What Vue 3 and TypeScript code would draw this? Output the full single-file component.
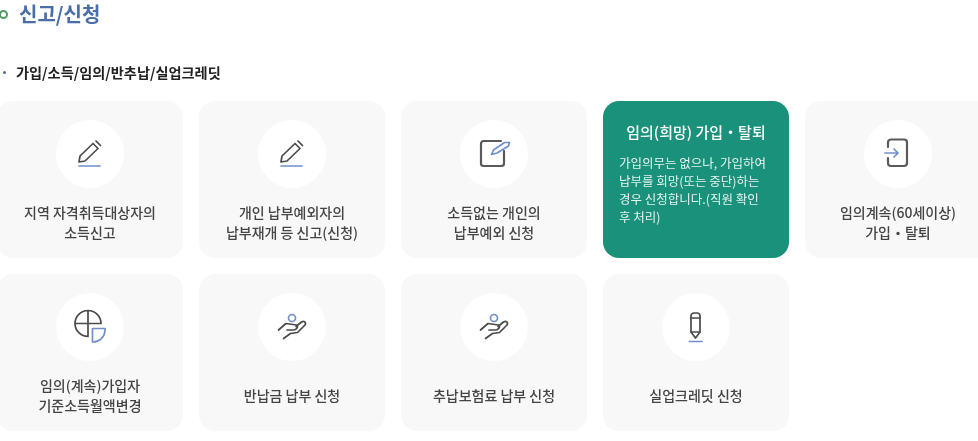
<script setup lang="ts">
type IconName = 'pencil' | 'edit' | 'enter' | 'pie' | 'hand' | 'pen';

interface MenuItem {
  icon?: IconName;
  lines?: string[];
  title?: string;
  desc?: string[];
}

// 두번째 줄까지 있는 메뉴 목록
const items: MenuItem[] = [
  { icon: 'pencil', lines: ['지역 자격취득대상자의', '소득신고'] },
  { icon: 'pencil', lines: ['개인 납부예외자의', '납부재개 등 신고(신청)'] },
  { icon: 'edit', lines: ['소득없는 개인의', '납부예외 신청'] },
  {
    title: '임의(희망) 가입・탈퇴',
    desc: ['가입의무는 없으나, 가입하여', '납부를 희망(또는 중단)하는', '경우 신청합니다.(직원 확인', '후 처리)'],
  },
  { icon: 'enter', lines: ['임의계속(60세이상)', '가입・탈퇴'] },
  { icon: 'pie', lines: ['임의(계속)가입자', '기준소득월액변경'] },
  { icon: 'hand', lines: ['반납금 납부 신청'] },
  { icon: 'hand', lines: ['추납보험료 납부 신청'] },
  { icon: 'pen', lines: ['실업크레딧 신청'] },
];
</script>

<template>
  <div class="page">
    <h2 class="title"><span class="ring"></span>신고/신청</h2>
    <h3 class="sub"><span class="dot"></span>가입/소득/임의/반추납/실업크레딧</h3>
    <div class="grid">
      <template v-for="(item, i) in items" :key="i">
        <div v-if="item.title" class="card active">
          <p class="active-title">{{ item.title }}</p>
          <p class="active-desc">
            <span v-for="line in item.desc" :key="line">{{ line }}</span>
          </p>
        </div>
        <div v-else class="card">
          <div class="circle">
            <svg width="40" height="40" viewBox="-2 -2 40 40" fill="none" stroke-linecap="round" stroke-linejoin="round">
              <g v-if="item.icon === 'pencil'">
                <path class="dark" d="M7 26 8 20 21 7.500 26 12.500 13 25Z" />
                <path class="dark" d="M24 5 28.500 9.500" />
                <path class="blue" d="M7 30H28" />
              </g>
              <g v-else-if="item.icon === 'edit'">
                <path class="thick" d="M25 5H7.500A2.500 2.500 0 0 0 5 7.500V27.500A2.500 2.500 0 0 0 7.500 30H25.500A2.500 2.500 0 0 0 28 27.500V15" />
                <path class="blue" d="M15.500 18.500 17.500 14 28.500 6.500 33.500 6.500 32.500 10 21 17Z" />
              </g>
              <g v-else-if="item.icon === 'enter'">
                <path class="thick" d="M8 11V6.500A3 3 0 0 1 11 3.500H24A3 3 0 0 1 27 6.500V27A3 3 0 0 1 24 30H11A3 3 0 0 1 8 27V22" />
                <path class="blue" d="M5 17H18M14 13 18 17 14 21" />
              </g>
              <g v-else-if="item.icon === 'pie'">
                <path class="dark" d="M16 27.500A13 13 0 1 1 29 14.500H3M16 1.500V27.500" />
                <path class="blue" d="M20.500 19.500H33V22A12 12 0 0 1 21 33H20.500Z" />
              </g>
              <g v-else-if="item.icon === 'hand'">
                <circle class="blue" cx="18" cy="9" r="3.500" />
                <path class="dark" d="M4.500 21 12 14.500 22.500 16C24.500 18 22.500 21 19.500 21H13" />
                <path class="dark" d="M9.500 29.500 16.500 24.500 23.500 23.500 31 16C32.500 13 30 11.500 27.500 13L22 17.500" />
              </g>
              <g v-else>
                <path class="dark" d="M13 7A3 3 0 0 1 16 4H19A3 3 0 0 1 22 7V23L17.500 29 13 23Z" />
                <path class="dark" d="M13 9H22M13 23H22" />
                <path class="blue" d="M11.500 32.500H24" />
              </g>
            </svg>
          </div>
          <p class="label">
            <span v-for="line in item.lines" :key="line">{{ line }}</span>
          </p>
        </div>
      </template>
    </div>
  </div>
</template>

<style scoped>
.page {
  width: 978px;
  height: 441px;
  overflow: hidden;
  font-family: 'Noto Sans CJK KR', 'Noto Sans', sans-serif;
  filter: blur(0.35px);
}

.title {
  display: flex;
  align-items: center;
  gap: 11px;
  height: 28px;
  margin: 0;
  font-size: 20px;
  font-weight: 700;
  line-height: 28px;
  color: #4a6ea8;
}

.ring {
  width: 9px;
  height: 9px;
  margin-left: -1px;
  border: 2.500px solid #4f9a63;
  border-radius: 50%;
  box-sizing: border-box;
}

.sub {
  display: flex;
  align-items: center;
  gap: 10px;
  height: 20px;
  margin: 34px 0 19px 3px;
  font-size: 14.200px;
  font-weight: 700;
  line-height: 20px;
  color: #222;
}

.dot {
  width: 3px;
  height: 3px;
  background: #4a6ea8;
  border-radius: 50%;
}

.grid {
  display: grid;
  grid-template-columns: repeat(5, 186px);
  grid-auto-rows: 157px;
  gap: 16px;
  margin-left: -3px;
}

.card {
  display: flex;
  flex-direction: column;
  align-items: center;
  background: #f8f8f8;
  border-radius: 16px;
}

.circle {
  display: flex;
  align-items: center;
  justify-content: center;
  width: 68px;
  height: 68px;
  margin-top: 19px;
  background: #fff;
  border-radius: 50%;
}

.dark,
.thick,
.blue {
  stroke-width: 1.700;
}

.dark {
  stroke: #4a4a4a;
}

.thick {
  stroke: #5a5a5a;
  stroke-width: 2.200;
}

.blue {
  stroke: #6f8fcb;
}

.label {
  display: flex;
  flex-direction: column;
  justify-content: center;
  align-items: center;
  min-height: 40px;
  margin: 14px 0 0;
  font-size: 14px;
  font-weight: 500;
  line-height: 20px;
  color: #444;
}

.active {
  align-items: flex-start;
  padding: 20px 16px 0;
  background: #1a917a;
  box-sizing: border-box;
  color: #fff;
}

.active-title {
  width: 100%;
  margin: 0;
  font-size: 15px;
  font-weight: 500;
  line-height: 21px;
  text-align: center;
}

.active-desc {
  display: flex;
  flex-direction: column;
  margin: 12px 0 0;
  font-size: 12.500px;
  line-height: 18px;
  white-space: nowrap;
  color: #e6f3f0;
}
</style>

<style>
html,
body {
  margin: 0;
  background: #fff;
  overflow: hidden;
}
</style>
